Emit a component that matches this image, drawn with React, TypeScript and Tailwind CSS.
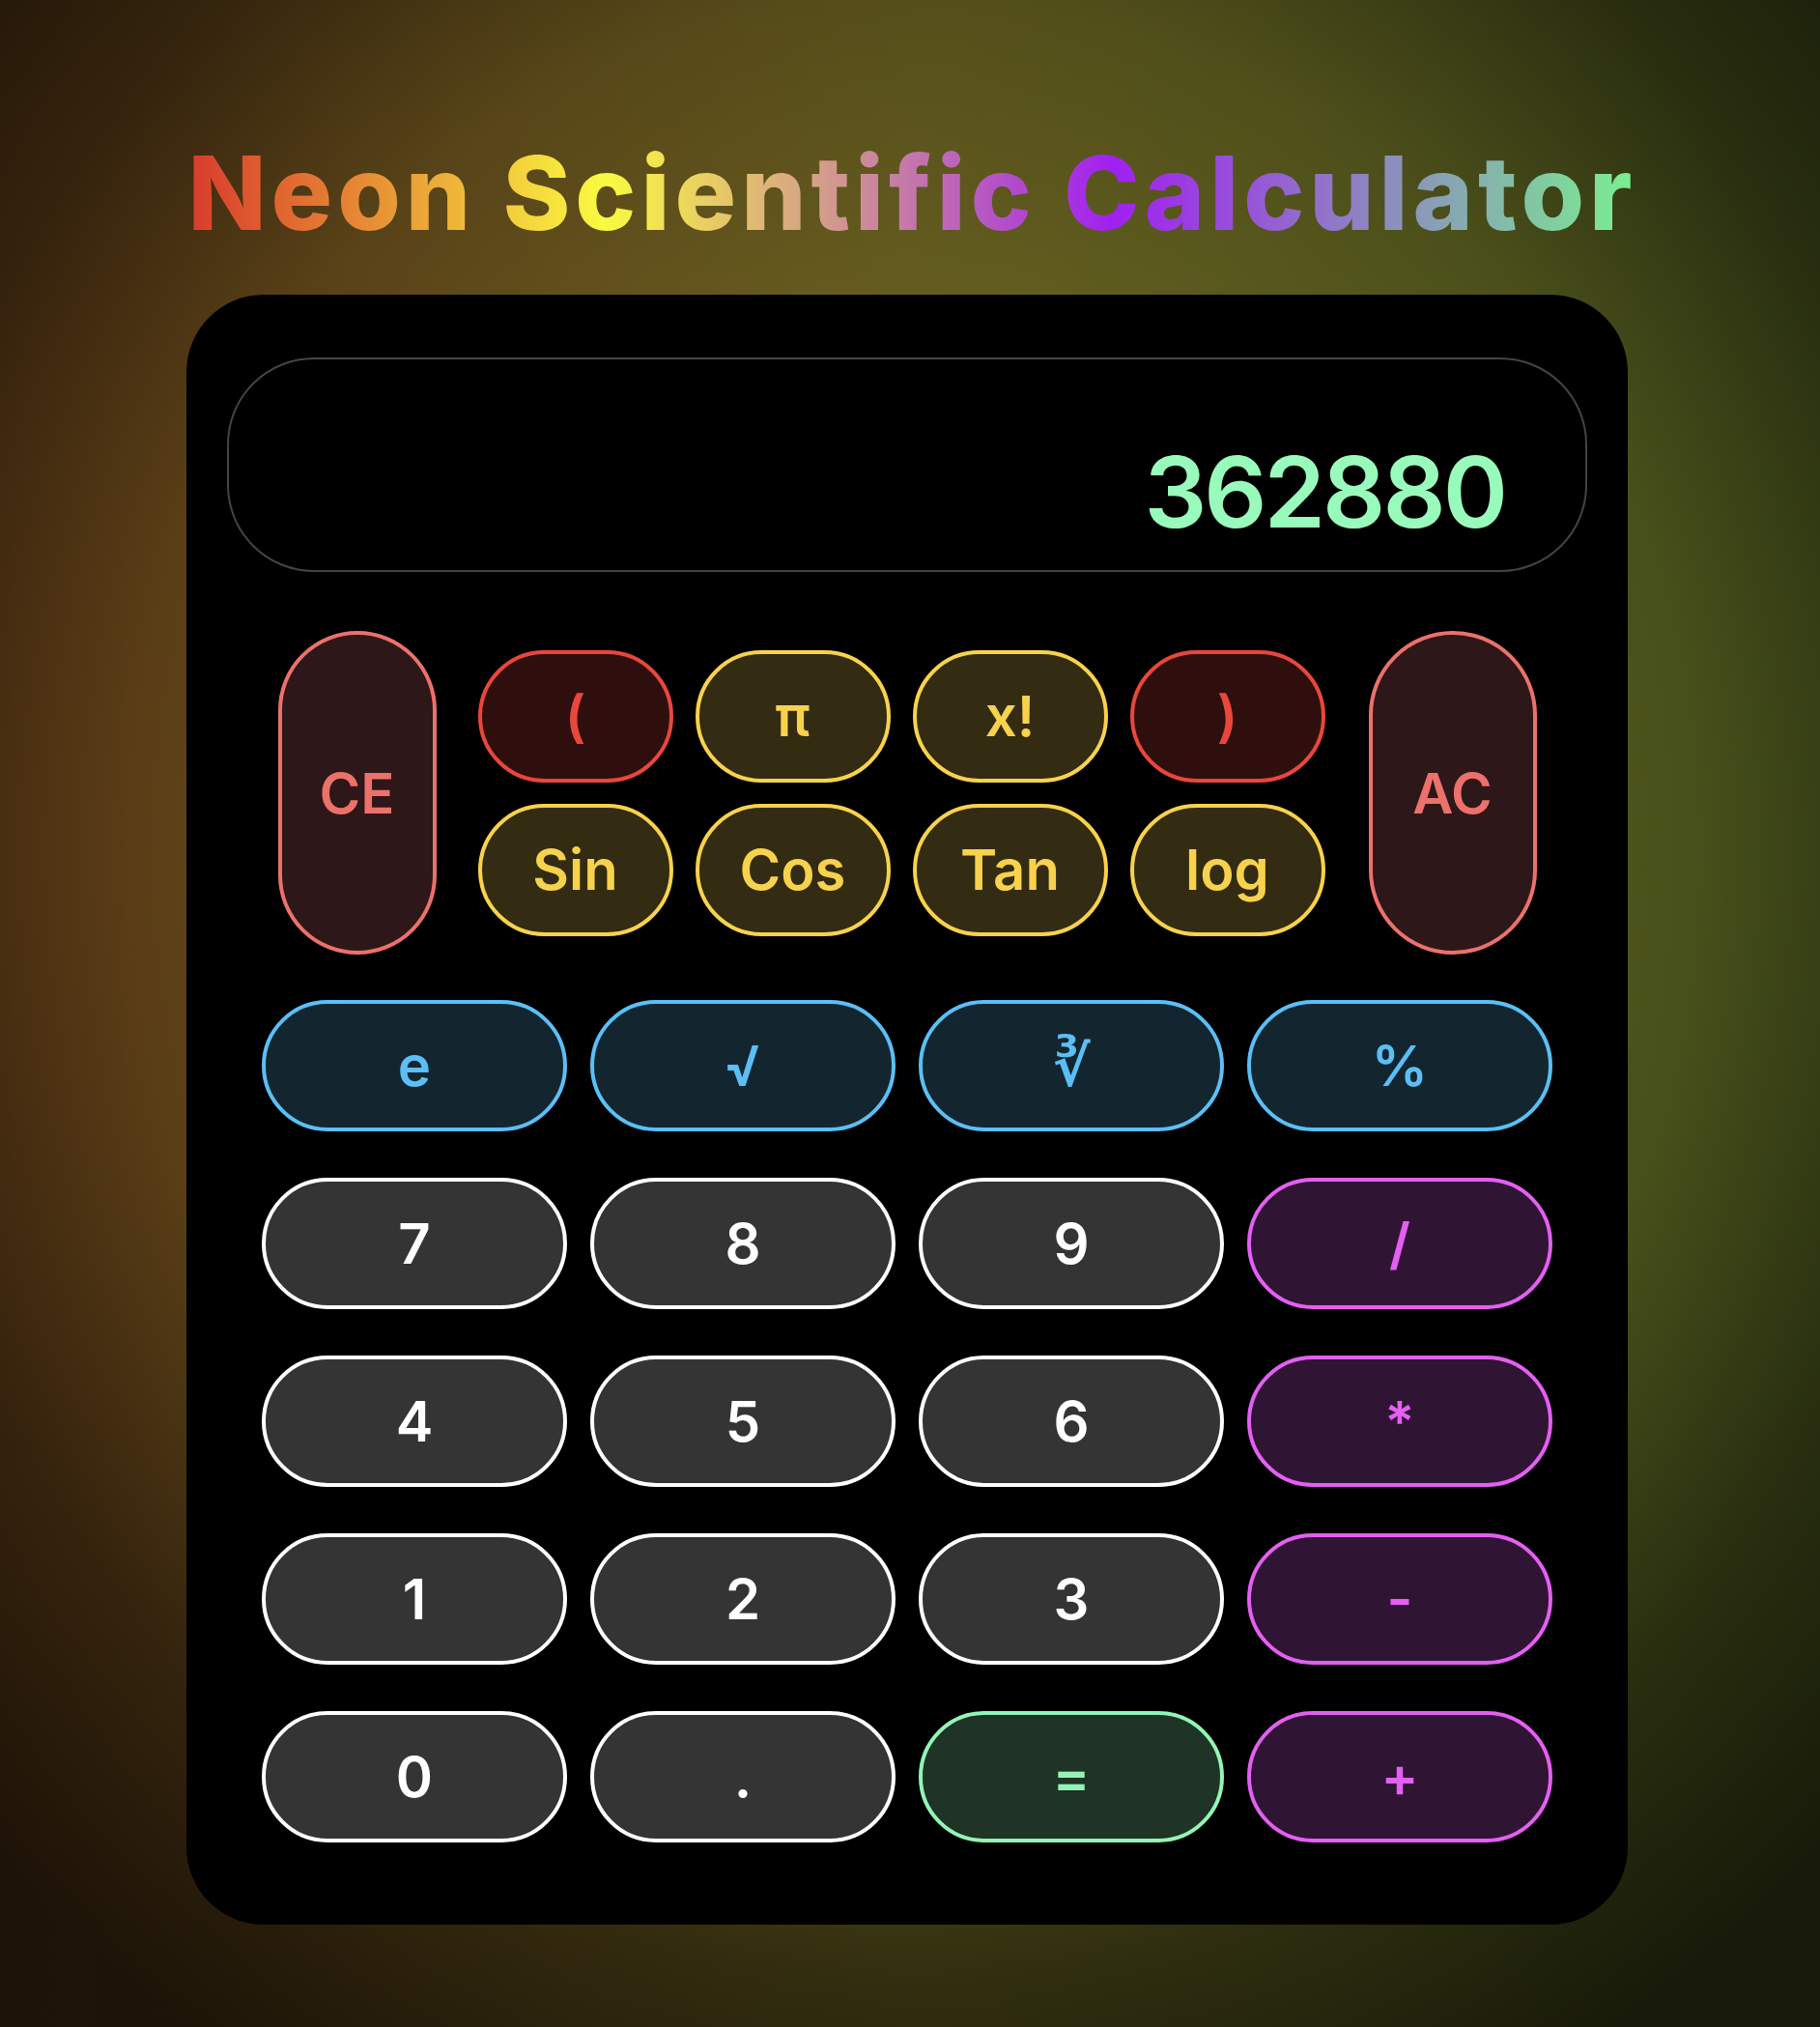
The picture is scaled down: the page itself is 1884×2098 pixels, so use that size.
import React from 'react';

/** Neon scientific calculator — static recreation of the display and keypad. */

type Tone = 'num' | 'op' | 'fn' | 'eq';

interface Key {
  label: string;
  tone: Tone;
}

const toneClass: Record<Tone, string> = {
  num: 'bg-[#343434] border-white text-white',
  fn: 'bg-[#132630] border-[#5bbff5] text-[#5bbff5]',
  op: 'bg-[#2f1533] border-[#e45ff2] text-[#e45ff2]',
  eq: 'bg-[#1f3326] border-[#93f5b5] text-[#93f5b5]',
};

const keys: Key[] = [
  { label: 'e', tone: 'fn' },
  { label: '√', tone: 'fn' },
  { label: '∛', tone: 'fn' },
  { label: '%', tone: 'fn' },
  { label: '7', tone: 'num' },
  { label: '8', tone: 'num' },
  { label: '9', tone: 'num' },
  { label: '/', tone: 'op' },
  { label: '4', tone: 'num' },
  { label: '5', tone: 'num' },
  { label: '6', tone: 'num' },
  { label: '*', tone: 'op' },
  { label: '1', tone: 'num' },
  { label: '2', tone: 'num' },
  { label: '3', tone: 'num' },
  { label: '-', tone: 'op' },
  { label: '0', tone: 'num' },
  { label: '.', tone: 'num' },
  { label: '=', tone: 'eq' },
  { label: '+', tone: 'op' },
];

const sciTop = [
  { label: '(', paren: true },
  { label: 'π', paren: false },
  { label: 'x!', paren: false },
  { label: ')', paren: true },
];
const sciBottom = ['Sin', 'Cos', 'Tan', 'log'];

const yellow = 'bg-[#332b12] border-[#f7d24c] text-[#f7d24c]';
const red = 'bg-[#2f0f0d] border-[#e8473b] text-[#e8473b]';
const clear = 'bg-[#2e1718] border-[#ec716b] text-[#ec716b]';

function SciKey({ label, className }: { label: string; className: string }) {
  return (
    <button
      className={`flex h-[137px] w-[202px] items-center justify-center rounded-full border-[4px] text-[58px] font-semibold leading-none ${className}`}
    >
      {label}
    </button>
  );
}

export default function App() {
  return (
    <div className="flex min-h-[2098px] w-full flex-col items-center bg-[radial-gradient(ellipse_1200px_1300px_at_50%_42%,transparent_45%,rgba(0,0,0,0.15)_68%,rgba(0,0,0,0.5)_90%,rgba(0,0,0,0.72)_112%),linear-gradient(90deg,#6a4419,#645c1f_50%,#515e1f)] pt-[147px] font-['Inter','DejaVu_Sans',sans-serif]">
      <h1 className="inline-block bg-[linear-gradient(90deg,#d8382c,#fafa40_29%,#a020f0_64%,#7af090)] bg-clip-text pl-[5px] text-[106px] font-extrabold leading-none tracking-[5px] text-transparent">
        Neon Scientific Calculator
      </h1>

      <div className="mt-[52px] flex w-[1492px] -translate-x-[3px] flex-col items-center rounded-[80px] bg-black px-[42px] pb-[85px] pt-[65px]">
        <div className="flex h-[222px] w-full items-end justify-end rounded-[90px] border-2 border-[#444444] pb-[30px] pr-[83px]">
          <span className="text-[102px] font-semibold leading-none tracking-[-3px] text-[#98fbbb]">362880</span>
        </div>

        <div className="mt-[61px] flex h-[335px] items-stretch">
          <button
            className={`flex w-[164px] items-center justify-center rounded-full border-[4px] text-[58px] font-semibold leading-none ${clear}`}
          >
            CE
          </button>
          <div className="ml-[43px] mr-[45px] flex flex-col justify-center gap-[22px]">
            <div className="flex gap-[23px]">
              {sciTop.map((k) => (
                <SciKey key={k.label} label={k.label} className={k.paren ? red : yellow} />
              ))}
            </div>
            <div className="flex gap-[23px]">
              {sciBottom.map((label) => (
                <SciKey key={label} label={label} className={yellow} />
              ))}
            </div>
          </div>
          <button
            className={`flex w-[174px] items-center justify-center rounded-full border-[4px] text-[58px] font-semibold leading-none ${clear}`}
          >
            AC
          </button>
        </div>

        <div className="mt-[47px] grid grid-cols-4 gap-x-[24px] gap-y-[48px]">
          {keys.map((k) => (
            <button
              key={k.label}
              className={`flex h-[136px] w-[316px] items-center justify-center rounded-full border-[4px] text-[58px] font-semibold leading-none ${toneClass[k.tone]}`}
            >
              {k.label}
            </button>
          ))}
        </div>
      </div>
    </div>
  );
}
